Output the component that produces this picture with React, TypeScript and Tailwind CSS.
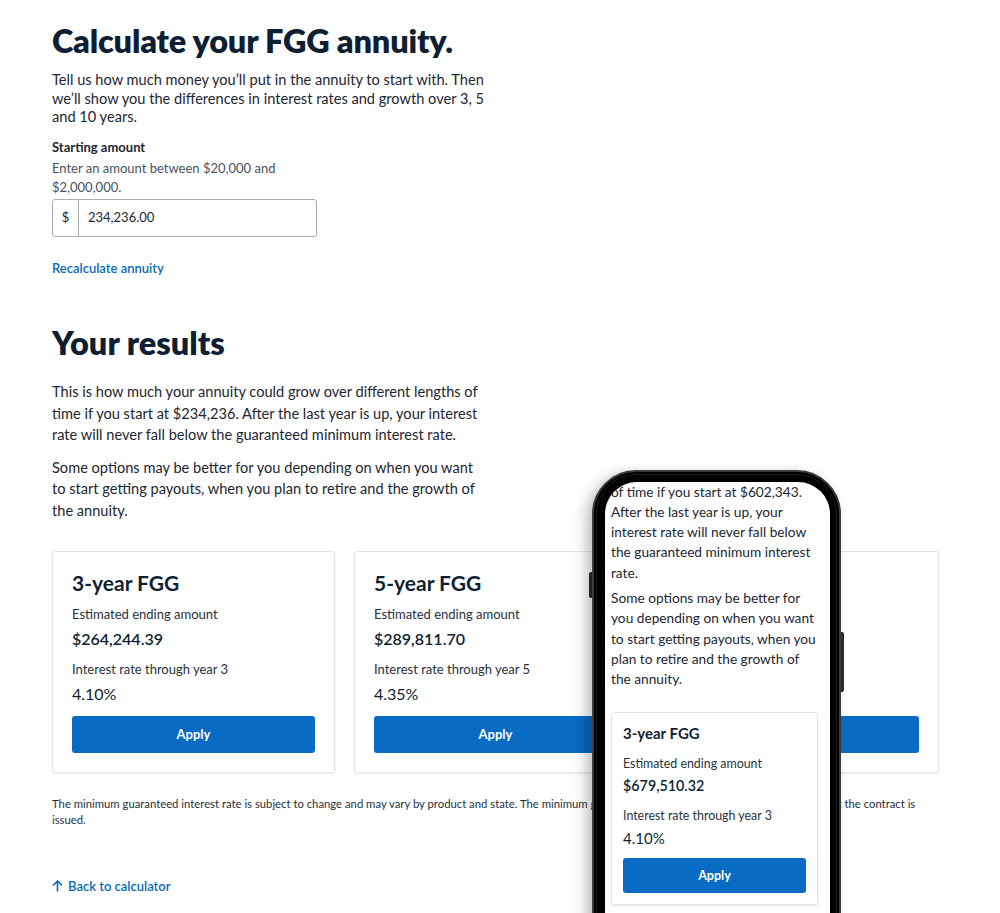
import React from "react";

const cards = [
  { title: "3-year FGG", amount: "$264,244.39", rateLabel: "Interest rate through year 3", rate: "4.10%" },
  { title: "5-year FGG", amount: "$289,811.70", rateLabel: "Interest rate through year 5", rate: "4.35%" },
  { title: "10-year FGG", amount: "$338,904.12", rateLabel: "Interest rate through year 10", rate: "4.30%" },
];

function ResultCard({ c }: { c: (typeof cards)[number] }) {
  return (
    <div className="flex flex-col rounded-[3px] border border-[#e3e5e8] bg-white px-[19px] pt-[18px] pb-[19px] shadow-[0_1px_3px_rgba(0,0,0,0.08)]">
      <div className="text-[21px] font-bold leading-[25px] text-[#0f1f33]">{c.title}</div>
      <div className="mt-[10px] text-[13px] leading-[18px] text-[#27313d]">Estimated ending amount</div>
      <div className="mt-[5px] text-[16px] font-semibold leading-[22px] text-[#0f1f33]">{c.amount}</div>
      <div className="mt-[10px] text-[13px] leading-[18px] text-[#27313d]">{c.rateLabel}</div>
      <div className="mt-[5px] text-[16px] leading-[22px] text-[#0f1f33]">{c.rate}</div>
      <button className="mt-[11px] h-[37px] w-full rounded-[3px] bg-[#0a6bc5] text-[13px] font-bold text-white">
        Apply
      </button>
    </div>
  );
}

function Phone() {
  return (
    <div className="absolute left-[592px] top-[470px] h-[520px] w-[249px]">
      <div className="absolute left-[-3px] top-[102px] h-[26px] w-[4px] rounded-l-[2px] bg-[#2b2b2b]" />
      <div className="absolute right-[-3px] top-[162px] h-[60px] w-[4px] rounded-r-[2px] bg-[#2b2b2b]" />
      <div className="absolute inset-0 rounded-[44px] border-[2px] border-[#3c3c3c] bg-black shadow-[-6px_4px_14px_rgba(0,0,0,0.25)]">
        <div className="absolute inset-[2px] rounded-[40px] border border-[#1c1c1c]" />
        <div className="absolute left-[11px] right-[9px] top-[10px] bottom-[10px] overflow-hidden rounded-[32px] bg-white">
          <div className="pl-[6px] pr-[12px] text-[13.7px] leading-[20.3px] text-[#1d2631]">
            <p className="-mt-[0.5px] whitespace-nowrap">
              of time if you start at $602,343.
              <br />
              After the last year is up, your
              <br />
              interest rate will never fall below
              <br />
              the guaranteed minimum interest
              <br />
              rate.
            </p>
            <p className="mt-[5px] whitespace-nowrap">
              Some options may be better for
              <br />
              you depending on when you want
              <br />
              to start getting payouts, when you
              <br />
              plan to retire and the growth of
              <br />
              the annuity.
            </p>
            <div className="mt-[23px] rounded-[3px] border border-[#e3e5e8] bg-white px-[11px] pt-[10px] pb-[11px] shadow-[0_1px_3px_rgba(0,0,0,0.08)]">
              <div className="text-[15px] font-bold leading-[20px] text-[#0f1f33]">3-year FGG</div>
              <div className="mt-[12px] text-[12.4px] leading-[17px] text-[#27313d]">Estimated ending amount</div>
              <div className="mt-[4px] text-[14.3px] font-semibold leading-[20px] text-[#0f1f33]">$679,510.32</div>
              <div className="mt-[11px] text-[12.4px] leading-[17px] text-[#27313d]">Interest rate through year 3</div>
              <div className="mt-[4px] text-[15px] leading-[20px] text-[#0f1f33]">4.10%</div>
              <button className="mt-[10px] h-[35px] w-full rounded-[3px] bg-[#0a6bc5] text-[12.5px] font-bold text-white">
                Apply
              </button>
            </div>
          </div>
        </div>
      </div>
    </div>
  );
}

export default function App() {
  return (
    <div className="relative h-[913px] w-[1000px] overflow-hidden bg-white" style={{ fontFamily: "Lato, 'Open Sans', sans-serif" }}>
      <div className="pl-[52px] pt-[21px]">
        <h1 className="text-[32.5px] font-extrabold leading-[40px] tracking-[-0.2px] text-[#0f1f33]">Calculate your FGG annuity.</h1>
        <p className="mt-[10px] whitespace-nowrap text-[14.6px] leading-[18.7px] text-[#1d2631]">
          Tell us how much money you’ll put in the annuity to start with. Then
          <br />
          we’ll show you the differences in interest rates and growth over 3, 5
          <br />
          and 10 years.
        </p>
        <div className="mt-[11px] text-[13px] font-bold leading-[18px] text-[#1d2631]">Starting amount</div>
        <p className="mt-[3px] whitespace-nowrap text-[13px] leading-[18.5px] text-[#4a5360]">
          Enter an amount between $20,000 and
          <br />
          $2,000,000.
        </p>
        <div className="mt-[3px] flex h-[38px] w-[265px] rounded-[3px] border border-[#a9adb3] bg-white">
          <div className="flex w-[26px] items-center justify-center border-r border-[#a9adb3] text-[13px] text-[#1d2631]">$</div>
          <div className="flex items-center pl-[9px] text-[13px] text-[#1d2631]">234,236.00</div>
        </div>
        <div className="mt-[22px] text-[13px] font-semibold leading-[18px] text-[#0b6aaf]">Recalculate annuity</div>

        <h2 className="mt-[46px] text-[32.5px] font-extrabold leading-[40px] text-[#0f1f33]">Your results</h2>
        <p className="mt-[18px] whitespace-nowrap text-[14.6px] leading-[21.5px] text-[#1d2631]">
          This is how much your annuity could grow over different lengths of
          <br />
          time if you start at $234,236. After the last year is up, your interest
          <br />
          rate will never fall below the guaranteed minimum interest rate.
        </p>
        <p className="mt-[11px] whitespace-nowrap text-[14.6px] leading-[21.5px] text-[#1d2631]">
          Some options may be better for you depending on when you want
          <br />
          to start getting payouts, when you plan to retire and the growth of
          <br />
          the annuity.
        </p>

        <div className="mt-[30px] grid w-[887px] grid-cols-3 gap-[19px]">
          {cards.map((c) => (
            <ResultCard key={c.title} c={c} />
          ))}
        </div>

        <p className="mt-[23px] whitespace-nowrap text-[11.3px] leading-[16px] text-[#27313d]">
          The minimum guaranteed interest rate is subject to change and may vary by product and state. The minimum guaranteed interest rate will be set at the time that the contract is
          <br />
          issued.
        </p>

        <div className="mt-[49px] flex items-center gap-[5px] text-[13px] font-semibold leading-[18px] text-[#0b6aaf]">
          <svg width="11" height="12" viewBox="0 0 11 12" fill="none" stroke="currentColor" strokeWidth="1.6">
            <path d="M5.5 11.5V1.2M1 5.5l4.5-4.5L10 5.5" />
          </svg>
          Back to calculator
        </div>
      </div>
      <Phone />
    </div>
  );
}
